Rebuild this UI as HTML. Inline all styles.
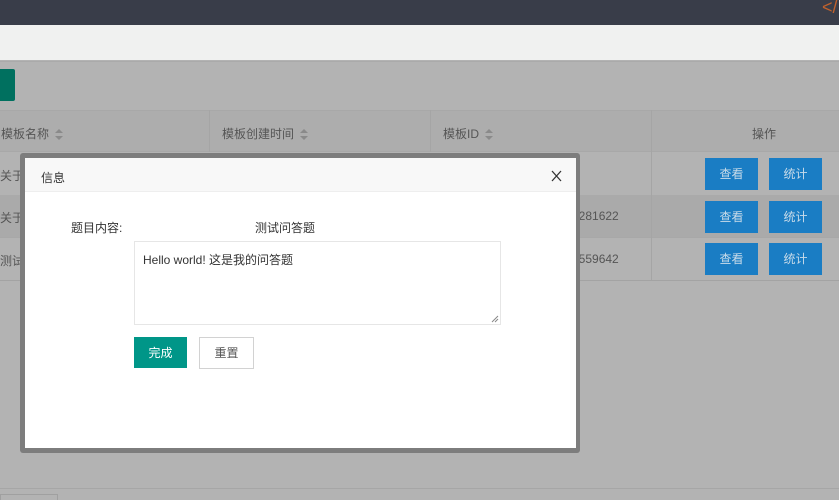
<!DOCTYPE html>
<html><head><meta charset="utf-8"><style>
*{box-sizing:border-box;margin:0;padding:0}
body{width:839px;height:500px;overflow:hidden;position:relative;background:#b3b3b3;font-family:"Liberation Sans","Noto Sans CJK SC",sans-serif;font-size:12px;color:#333}
.a{position:absolute}
.btn{position:absolute;background:#1a7dc4;color:#c8dbe9;text-align:center;line-height:32px;height:32px;width:53px;font-size:12px}
.hd{color:#555}
.arr{display:inline-block;margin-left:6px;vertical-align:middle;width:0;position:relative}
.arr:before{content:"";position:absolute;left:0;top:-6px;border:4px solid transparent;border-bottom-color:#8a8a8a;border-top:0}
.arr:after{content:"";position:absolute;left:0;top:1px;border:4px solid transparent;border-top-color:#8a8a8a;border-bottom:0}
</style></head><body>
<div class="a" style="left:0;top:0;width:839px;height:25px;background:#393d49"></div>
<div class="a" style="left:822px;top:-3px;color:#c0612c;font-size:18px">&lt;/</div>
<div class="a" style="left:0;top:25px;width:839px;height:35px;background:#f0f1f0"></div>
<div class="a" style="left:0;top:61px;width:839px;height:1px;background:#aaa"></div>
<div class="a" style="left:0;top:69px;width:15px;height:32px;background:#00705f;border-radius:0 2px 2px 0"></div>
<div class="a" style="left:0;top:110px;width:839px;height:42px;background:#adadad;border-top:1px solid #a8a8a8;border-bottom:1px solid #a8a8a8"></div>
<div class="a" style="left:0;top:195px;width:839px;height:42px;background:#aaaaaa"></div>
<div class="a" style="left:0;top:237px;width:839px;height:1px;background:#a8a8a8"></div>
<div class="a" style="left:0;top:280px;width:839px;height:1px;background:#a3a3a3"></div>
<div class="a" style="left:209px;top:110px;width:1px;height:42px;background:#a5a5a5"></div>
<div class="a" style="left:430px;top:110px;width:1px;height:42px;background:#a5a5a5"></div>
<div class="a" style="left:651px;top:110px;width:1px;height:170px;background:#a5a5a5"></div>
<div class="a hd" style="left:1px;top:125px">模板名称<span class="arr"></span></div>
<div class="a hd" style="left:222px;top:125px">模板创建时间<span class="arr"></span></div>
<div class="a hd" style="left:443px;top:125px">模板ID<span class="arr"></span></div>
<div class="a hd" style="left:752px;top:125px">操作</div>
<div class="a hd" style="left:0;top:167px">关于</div>
<div class="a hd" style="left:0;top:209px">关于</div>
<div class="a hd" style="left:0;top:252px">测试</div>
<div class="a hd" style="left:572px;top:209px">6281622</div>
<div class="a hd" style="left:572px;top:252px">9559642</div>
<div class="btn" style="left:705px;top:158px">查看</div><div class="btn" style="left:769px;top:158px">统计</div>
<div class="btn" style="left:705px;top:201px">查看</div><div class="btn" style="left:769px;top:201px">统计</div>
<div class="btn" style="left:705px;top:243px">查看</div><div class="btn" style="left:769px;top:243px">统计</div>
<div class="a" style="left:0;top:488px;width:839px;height:1px;background:#a6a6a6"></div>
<div class="a" style="left:0;top:494px;width:58px;height:6px;border:1px solid #a0a0a0;border-bottom:0"></div>
<div class="a" style="left:20px;top:153px;width:560px;height:300px;background:#7d7d7d;border-radius:3px"></div>
<div class="a" style="left:25px;top:158px;width:551px;height:290px;background:#fff">
 <div class="a" style="left:0;top:0;width:551px;height:34px;background:#f8f8f8;border-bottom:1px solid #eee"></div>
 <div class="a" style="left:16px;top:11px;color:#333">信息</div>
 <svg class="a" style="left:526px;top:12px" width="11" height="12" viewBox="0 0 11 12"><path d="M1 1L10 11M10 1L1 11" stroke="#333" stroke-width="1.3" fill="none"/></svg>
 <div class="a" style="left:46px;top:61px;color:#333">题目内容:</div>
 <div class="a" style="left:230px;top:61px;color:#333">测试问答题</div>
 <div class="a" style="left:109px;top:83px;width:367px;height:84px;border:1px solid #e6e6e6;padding:9px 8px">Hello world!&nbsp;这是我的问答题</div>
 <svg class="a" style="left:466px;top:157px" width="8" height="8" viewBox="0 0 8 8"><path d="M7 1L1 7M7 4L4 7" stroke="#888" stroke-width="1" fill="none"/></svg>
 <div class="a" style="left:109px;top:179px;width:53px;height:31px;background:#009688;color:#fff;text-align:center;line-height:32px">完成</div>
 <div class="a" style="left:174px;top:179px;width:55px;height:32px;border:1px solid #d2d2d2;color:#555;text-align:center;line-height:31px">重置</div>
</div>
</body></html>
